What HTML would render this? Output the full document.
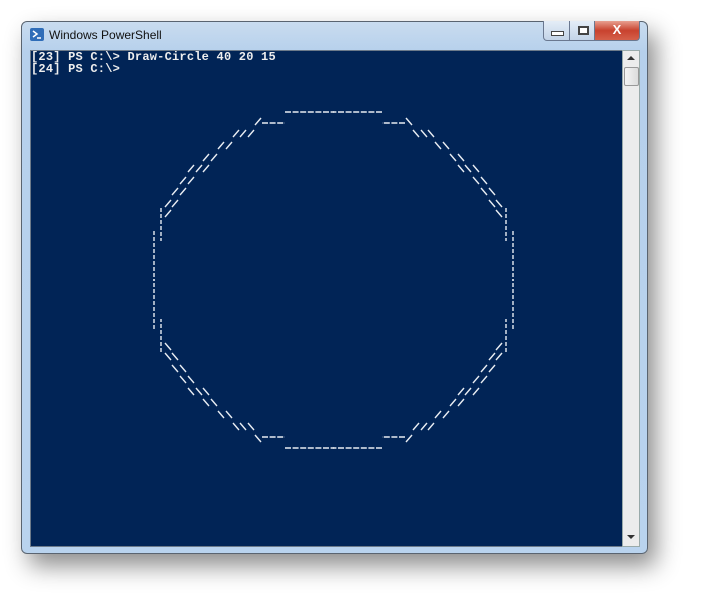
<!DOCTYPE html>
<html><head><style>
body{margin:0;width:702px;height:609px;background:#fff;position:relative;overflow:hidden;font-family:"Liberation Sans",sans-serif}
.win{position:absolute;left:21px;top:21px;width:625px;height:531px;border:1px solid #5a6470;border-radius:6px;background:linear-gradient(#c9dcef,#b6d0ec 30px,#b9d3ee);box-shadow:8px 12px 24px rgba(0,0,0,.45)}
.title{position:absolute;left:35px;top:28px;font-size:12px;color:#111}
.icon{position:absolute;left:30px;top:28px;width:14px;height:13px;background:#2f6db8;border-radius:2px}
.client{position:absolute;left:30px;top:50px;width:592px;height:495px;background:#012456;border:1px solid #6c7a8a}
.sb{position:absolute;left:622px;top:50px;width:16px;height:495px;background:#ececec;border:1px solid #9aa;}
pre{margin:0;position:absolute;left:31px;top:51px;color:#eee;font:bold 12px/12px "Liberation Mono",monospace;letter-spacing:.22px}
.btn{position:absolute;top:21px;height:19px;border:1px solid #6a7890;border-top:none}
</style></head><body>
<div class="win"></div>
<div class="icon"><svg width="14" height="13"><path d="M3 3l4 3-4 3M7 10h4" stroke="#fff" stroke-width="1.5" fill="none"/></svg></div>
<div class="title" style="left:49px">Windows PowerShell</div>
<div class="btn" style="left:543px;width:25px;background:linear-gradient(#e4edf7,#c3d4e8);border-radius:0 0 0 4px"><div style="position:absolute;left:7px;top:10px;width:11px;height:3px;background:#fff;border:1px solid #444"></div></div>
<div class="btn" style="left:569px;width:25px;background:linear-gradient(#e4edf7,#c3d4e8)"><div style="position:absolute;left:8px;top:5px;width:7px;height:5px;border:2px solid #444;background:#fff"></div></div>
<div class="btn" style="left:594px;width:44px;background:linear-gradient(#e8a090,#c8422e 50%,#d5604a);border-radius:0 0 4px 0;color:#fff;font-weight:bold;font-size:13px;text-align:center;line-height:18px">X</div>
<div class="client"></div>
<div class="sb"><div style="position:absolute;left:1px;top:16px;width:13px;height:17px;background:linear-gradient(90deg,#f4f4f4,#dcdcdc);border:1px solid #999;border-radius:2px"></div>
<div style="position:absolute;left:4px;top:5px;border:4px solid transparent;border-bottom:4px solid #333;border-top:none"></div>
<div style="position:absolute;left:4px;top:484px;border:4px solid transparent;border-top:4px solid #333;border-bottom:none"></div></div>
<pre>[23] PS C:\&gt; Draw-Circle 40 20 15
[24] PS C:\&gt;</pre>
<svg width="702" height="609" style="position:absolute;left:0;top:0">
<defs><g id="q" stroke="#e8ecf2" stroke-width="1.4" fill="none">
<path d="M285 112H334" stroke-dasharray="6 1.6"/>
<path d="M262 123H285" stroke-dasharray="6 1.6"/>
<path d="M161 208V241" stroke-dasharray="4 2"/>
<path d="M154 231V281" stroke-dasharray="4 2"/>
<path d="M255 125l6-7M233 137l6-7M240 137l6-7M248 137l6-7M218 149l6-7M226 149l6-7M203 161l6-7M211 161l6-7M188 172l6-7M196 172l6-7M203 172l6-7M180 184l6-7M188 184l6-7M172 195l6-7M180 195l6-7M165 207l6-7M172 207l6-7M165 217l6-7"/>
</g></defs>
<use href="#q"/>
<use href="#q" transform="translate(667,0) scale(-1,1)"/>
<use href="#q" transform="translate(0,560) scale(1,-1)"/>
<use href="#q" transform="translate(667,560) scale(-1,-1)"/>
</svg>
</body></html>
